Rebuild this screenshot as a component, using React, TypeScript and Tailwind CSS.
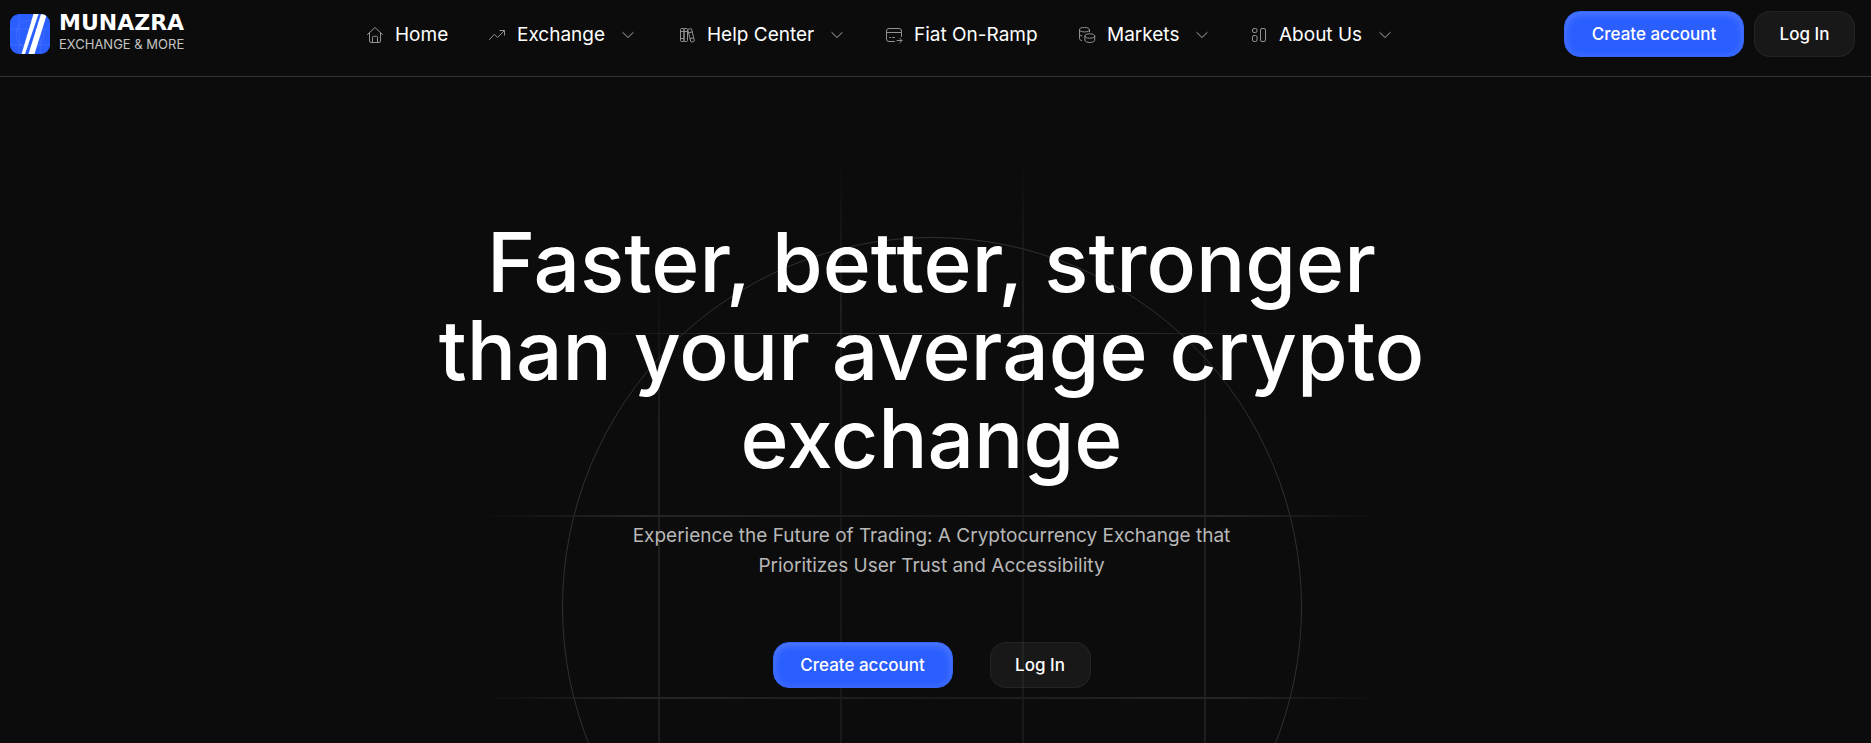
import React from 'react';

interface NavItem {
  label: string;
  icon: React.ReactNode;
  width: string;
  menu?: boolean;
}

const Icon: React.FC<{ children: React.ReactNode }> = ({ children }) => (
  <svg
    viewBox="0 0 18 18"
    className="h-[18px] w-[18px] shrink-0 text-[#929292]"
    fill="none"
    stroke="currentColor"
    strokeLinecap="round"
    strokeLinejoin="round"
    aria-hidden="true"
  >
    {children}
  </svg>
);

const HomeIcon = () => (
  <Icon>
    <path d="M1.500 8.500 9 1.500l7.500 7M3.500 7v8A1.500 1.500 0 0 0 5 16.500h8a1.500 1.500 0 0 0 1.500-1.500V7" />
    <path d="M6.500 16.300v-5a1 1 0 0 1 1-1h3a1 1 0 0 1 1 1v5" />
  </Icon>
);

const TrendIcon = () => (
  <Icon>
    <path d="M1.500 13.500 6.300 8.300l3.400 3.200L16.500 4.500M11.800 4.500h4.700v4.700" />
  </Icon>
);

const BooksIcon = () => (
  <Icon>
    <rect x="2.500" y="2.500" width="3.500" height="13" rx="1" />
    <rect x="6" y="2.500" width="3.500" height="13" rx="1" />
    <path d="M2.500 5.500h7M2.500 12.500H6" />
    <path d="m10.300 3.300 2.300-.7a.8.8 0 0 1 1 .6l2.700 11.300a.8.8 0 0 1-.6 1l-2 .5a.8.8 0 0 1-1-.6L10 4.500M10.900 6.800l3.400-.9M12.200 12.700l3.400-.9" />
  </Icon>
);

const CardIcon = () => (
  <Icon>
    <path d="M9.500 15.500H4A2.500 2.500 0 0 1 1.500 13V5A2.500 2.500 0 0 1 4 2.500h10A2.500 2.500 0 0 1 16.500 5v5.500M1.500 6.500h15M4.500 11.500h1M7.500 11.500h2M12 14.500h5M14.800 12.300l2.200 2.200-2.200 2.200" />
  </Icon>
);

const CoinsIcon = () => (
  <Icon>
    <ellipse cx="6.500" cy="3.700" rx="5" ry="2.200" />
    <path d="M1.500 3.700v9c0 .8.700 1.400 2 1.800M11.500 3.700v2.100M1.500 8.200c0 .8.900 1.400 2.400 1.800" />
    <ellipse cx="11.800" cy="10" rx="4.900" ry="2.200" />
    <path d="M6.900 10v4.300c0 1.200 2.200 2.200 4.900 2.200s4.900-1 4.900-2.200V10" />
  </Icon>
);

const BlocksIcon = () => (
  <Icon>
    <rect x="2.500" y="2.500" width="4.500" height="4" rx="1.500" />
    <rect x="2.500" y="9.500" width="4.500" height="6" rx="1.500" />
    <rect x="10.500" y="2.500" width="5" height="13" rx="1.500" />
  </Icon>
);

const Chevron = () => (
  <svg viewBox="0 0 12 8" className="h-2 w-3 text-[#a8a8a8]" fill="none" stroke="currentColor" strokeLinecap="round" strokeLinejoin="round" aria-hidden="true">
    <path d="m.8 1.500 5.200 5 5.200-5" />
  </svg>
);

const navItems: NavItem[] = [
  { label: 'Home', icon: <HomeIcon />, width: 'w-[122px]' },
  { label: 'Exchange', icon: <TrendIcon />, width: 'w-[190px]', menu: true },
  { label: 'Help Center', icon: <BooksIcon />, width: 'w-[207px]', menu: true },
  { label: 'Fiat On-Ramp', icon: <CardIcon />, width: 'w-[193px]' },
  { label: 'Markets', icon: <CoinsIcon />, width: 'w-[172px]', menu: true },
  { label: 'About Us', icon: <BlocksIcon />, width: 'w-[145px]', menu: true },
];

const Logo = () => (
  <a href="#" className="flex items-center gap-[9px]">
    <svg viewBox="0 0 40 40" className="h-10 w-10" aria-hidden="true">
      <defs>
        <clipPath id="badge">
          <rect width="40" height="40" rx="9" />
        </clipPath>
      </defs>
      <g clipPath="url(#badge)">
        <rect width="40" height="40" fill="#2b5eff" />
        <g fill="none" stroke="#ffffff" strokeOpacity="0.150" strokeWidth="0.600">
          <path d="M9 0v40M31 0v40M0 15h40M0 31h40" />
          <circle cx="20" cy="20" r="14" />
        </g>
        <path d="M23.500 0h5L15 40h-3.500z" fill="#fff" />
        <path d="M31 0h6L24.500 40h-6z" fill="#fff" />
      </g>
    </svg>
    <span className="flex flex-col">
      <span className="font-['DejaVu_Sans',sans-serif] text-[22px] leading-5 font-bold">MUNAZRA</span>
      <span className="text-[13px] leading-[22px] text-[#c4c4c4]">EXCHANGE &amp; MORE</span>
    </span>
  </a>
);

const PrimaryButton = () => (
  <button
    type="button"
    className="h-[46px] w-[180px] rounded-2xl border border-[#3566f5] bg-[#2b5eff] pt-px text-[17px] font-medium whitespace-nowrap shadow-[inset_0_2px_8px_rgba(255,255,255,0.2)]"
  >
    Create account
  </button>
);

const SecondaryButton = () => (
  <button
    type="button"
    className="h-[46px] w-[101px] rounded-2xl border border-white/5 bg-white/5 pt-px text-[17px] font-medium whitespace-nowrap"
  >
    Log In
  </button>
);

/** Decorative grid and circle behind the hero text */
const HeroGrid = () => (
  <svg
    viewBox="0 0 901 666"
    className="pointer-events-none absolute top-0 left-1/2 h-[666px] w-[901px] -translate-x-1/2"
    fill="none"
    aria-hidden="true"
  >
    <defs>
      <linearGradient id="fadeX" gradientUnits="userSpaceOnUse" x1="0" y1="0" x2="901" y2="0">
        <stop offset="0" stopColor="#262626" stopOpacity="0" />
        <stop offset="0.180" stopColor="#262626" />
        <stop offset="0.500" stopColor="#1a1a1a" />
        <stop offset="0.820" stopColor="#262626" />
        <stop offset="1" stopColor="#262626" stopOpacity="0" />
      </linearGradient>
      <linearGradient id="fadeTop" gradientUnits="userSpaceOnUse" x1="100" y1="0" x2="801" y2="0">
        <stop offset="0" stopColor="#303030" stopOpacity="0" />
        <stop offset="0.250" stopColor="#303030" />
        <stop offset="0.750" stopColor="#303030" />
        <stop offset="1" stopColor="#303030" stopOpacity="0" />
      </linearGradient>
      <linearGradient id="fadeY" gradientUnits="userSpaceOnUse" x1="0" y1="80" x2="0" y2="666">
        <stop offset="0" stopColor="#303030" stopOpacity="0" />
        <stop offset="0.250" stopColor="#303030" />
        <stop offset="0.600" stopColor="#202020" />
        <stop offset="1" stopColor="#262626" />
      </linearGradient>
      <linearGradient id="fadeSide" gradientUnits="userSpaceOnUse" x1="0" y1="180" x2="0" y2="666">
        <stop offset="0" stopColor="#303030" stopOpacity="0" />
        <stop offset="0.350" stopColor="#303030" />
        <stop offset="1" stopColor="#303030" />
      </linearGradient>
    </defs>
    <circle cx="450.500" cy="530" r="369.500" stroke="#303030" />
    <path d="M359.500 80v586M541.500 80v586" stroke="url(#fadeY)" />
    <path d="M177.500 180v486M723.500 180v486" stroke="url(#fadeSide)" />
    <path d="M100 256.500h701" stroke="url(#fadeTop)" />
    <path d="M0 439h901M0 621h901" stroke="url(#fadeX)" strokeWidth="2" />
  </svg>
);

const App: React.FC = () => (
  <div className="min-h-screen overflow-hidden bg-[#0c0c0c] font-[Inter,sans-serif] text-white">
    <header className="flex h-[77px] items-start justify-between border-b border-[#333] pr-4 pl-[10px]">
      <div className="flex w-[356px] pt-[13px]">
        <Logo />
      </div>
      <nav className="flex flex-1 pt-[21px]" aria-label="Main">
        {navItems.map(item => (
          <div key={item.label} className={item.width}>
            <a href="#" className="flex items-center text-[19px] leading-7 whitespace-nowrap">
              {item.icon}
              <span className="ml-[11px]">{item.label}</span>
              {item.menu && <span className="ml-[17px]"><Chevron /></span>}
            </a>
          </div>
        ))}
      </nav>
      <div className="flex gap-[10px] pt-[11px]">
        <PrimaryButton />
        <SecondaryButton />
      </div>
    </header>

    <main className="relative mr-2 overflow-hidden">
      <HeroGrid />
      <section className="relative flex flex-col items-center pt-[142px] text-center">
        <h1 className="max-w-[1040px] text-[82px] leading-[88px] font-medium">
          Faster, better, stronger than your average crypto exchange
        </h1>
        <p className="mt-[38px] max-w-[660px] text-[19px] leading-[30px] text-[#b8b8b8]">
          Experience the Future of Trading: A Cryptocurrency Exchange that Prioritizes User Trust and Accessibility
        </p>
        <div className="mt-[61px] flex gap-[37px] pb-[55px]">
          <PrimaryButton />
          <SecondaryButton />
        </div>
      </section>
    </main>
  </div>
);

export default App;
